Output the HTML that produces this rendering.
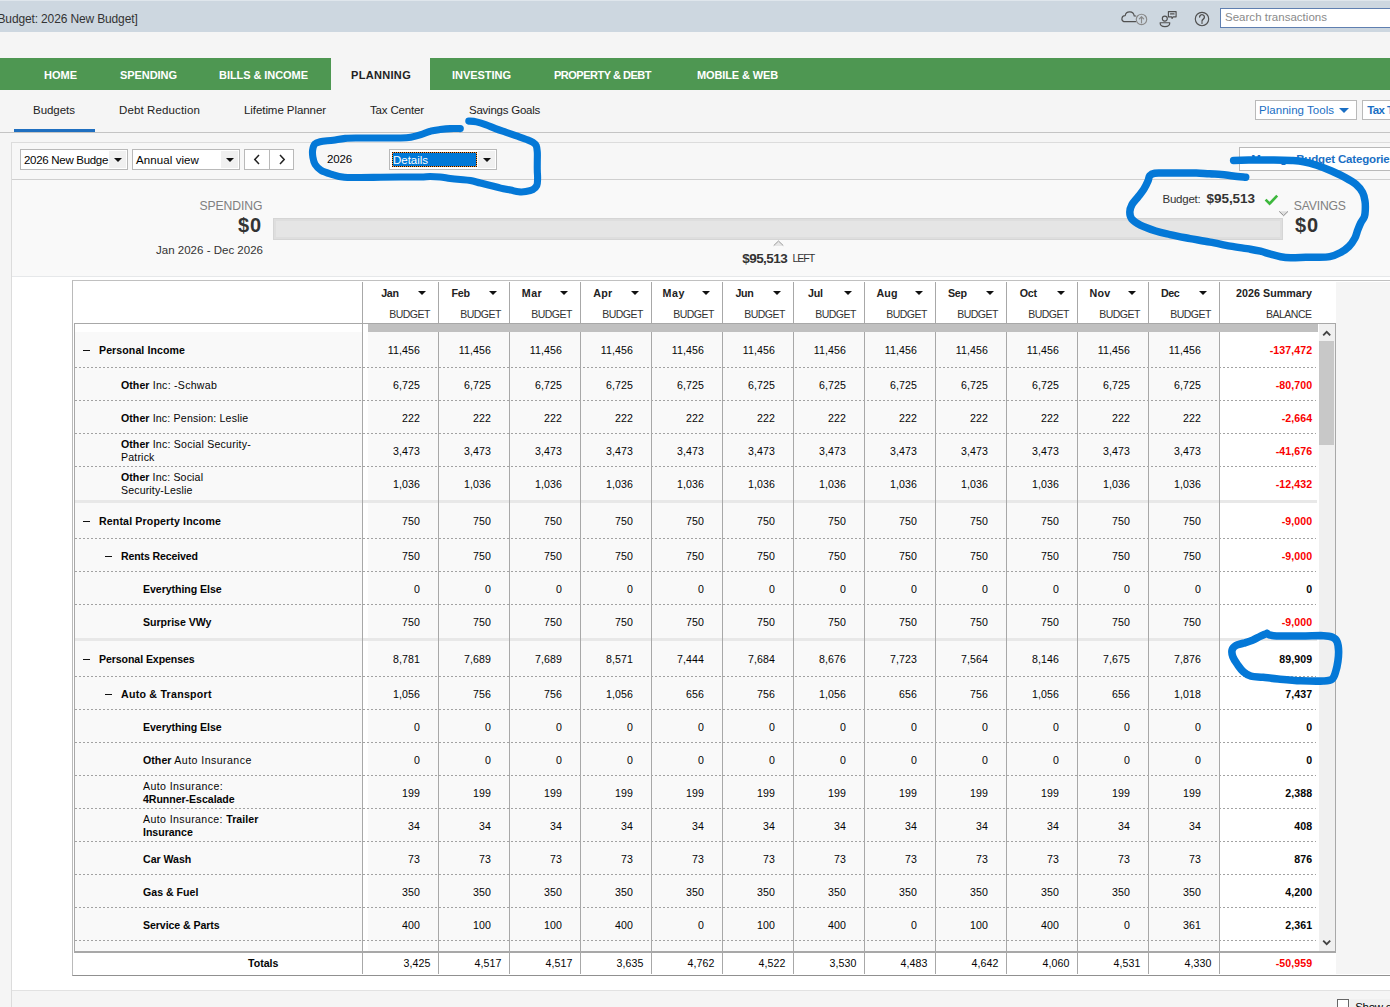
<!DOCTYPE html>
<html lang="en">
<head>
<meta charset="utf-8">
<title>Budget: 2026 New Budget</title>
<style>
html,body{margin:0;padding:0}
body{width:1390px;height:1007px;position:relative;overflow:hidden;background:#f5f5f5;font-family:"Liberation Sans",sans-serif;color:#111}
div{box-sizing:border-box}
.a{position:absolute}
.t{position:absolute;white-space:nowrap;line-height:16px;height:16px;font-size:10.6px;color:#050505}
.t b{font-weight:700}
.m b{letter-spacing:.05px}
#title{left:0;top:0;width:1390px;height:32px;background:#cdd7e0}
#nav{left:0;top:58px;width:1390px;height:32px;background:#4e9752}
#navsel{left:331px;top:58px;width:99px;height:32px;background:#f5f5f5}
#tabline{left:0;top:132px;width:1390px;height:1px;background:#c4c4c4}
#tabsel{left:14px;top:129px;width:81px;height:3px;background:#1f6fc0}
#panel{left:11px;top:142px;width:1390px;height:870px;background:#fff;border-left:1px solid #dcdcdc;border-top:1px solid #dcdcdc}
#toolbar{left:12px;top:143px;width:1378px;height:37px;background:#f7f7f7;border-bottom:1px solid #cfcfcf}
#summary{left:12px;top:180px;width:1378px;height:97px;background:#f9f9f9;border-bottom:1px solid #e6e8ea}
#rightgray{left:1336px;top:282px;width:54px;height:692px;background:#f5f5f5}
#bottomgray{left:12px;top:990px;width:1378px;height:17px;background:#f5f5f5;border-top:1px solid #e2e2e2}
.sel{position:absolute;height:21px;top:149px;background:#fff;border:1px solid #b9b9b9}
.sel i{position:absolute;right:1px;top:1px;width:17px;height:17px;background:#f0f0f0}
.sel i:after{content:"";position:absolute;left:5px;top:7px;border-left:4px solid transparent;border-right:4px solid transparent;border-top:4px solid #111}
.btn{position:absolute;background:#fff;border:1px solid #b9b9b9}
#bar{left:273px;top:218px;width:1010px;height:22px;background:#e5e5e5;border:1px solid #d5d5d5;box-shadow:inset 0 0 0 2px #dedede}
/* table */
#outer{left:72px;top:280px;width:1318px;height:696px;border-top:1px solid #c0c0c0;border-left:1px solid #bababa;border-bottom:1px solid #909090;background:#fff}
#grid{left:74px;top:323px;width:1262px;height:630px;border:1px solid #a8a8a8;border-bottom:2px solid #a8a8a8;background:#fff}
#graybar{left:368px;top:324px;width:950px;height:8px;background:#c0c0c0}
.row{position:absolute;left:75px;width:1242px;background:linear-gradient(to right,#f9f9f9 0,#f9f9f9 288px,#fff 288px,#fff 293px,#f9f9f9 293px,#f9f9f9 1145px,#fff 1145px)}
.row.dash{background:repeating-linear-gradient(to right,#a2a2a2 0,#a2a2a2 2px,transparent 2px,transparent 4px) 0 100%/1241px 1px no-repeat,linear-gradient(to right,#f9f9f9 0,#f9f9f9 288px,#fff 288px,#fff 293px,#f9f9f9 293px,#f9f9f9 1145px,#fff 1145px)}
.band{position:absolute;left:75px;width:1242px;height:3px;background:#e8e8e8}
.minus{position:absolute;width:7px;height:1px;background:#111}
.marr{position:absolute;top:291px;border-left:4px solid transparent;border-right:4px solid transparent;border-top:4px solid #111}
.vs{position:absolute;width:1px;background:#a8a8a8}
#strip{left:363px;top:332px;width:5px;height:619px;background:#fff}
#sumcol{left:1220px;top:332px;width:98px;height:619px;background:#fff}
#sbar{left:1319px;top:324px;width:16px;height:627px;background:#f0f0f0}
#thumb{left:1319px;top:341px;width:15px;height:104px;background:#c8c8c8}
.dl{position:absolute;left:75px;width:1242px;height:0;border-top:1px dashed #9a9a9a}
</style>
</head>
<body>
<div id="title" class="a"></div>
<div class="a" style="left:0;top:0;width:1390px;height:1px;background:#dfe6ec"></div>
<div id="nav" class="a"></div>
<div id="navsel" class="a"></div>
<div id="tabline" class="a"></div>
<div id="tabsel" class="a"></div>
<div id="panel" class="a"></div>
<div id="toolbar" class="a"></div>
<div id="summary" class="a"></div>
<div id="bottomgray" class="a"></div>

<!-- title-bar search + icons -->
<div class="a" style="left:1220px;top:8px;width:180px;height:20px;background:#fff;border:1px solid #5f7fb0"></div>
<svg class="a" style="left:1110px;top:0" width="110" height="32" viewBox="0 0 110 32" fill="none" stroke="#505050" stroke-width="1.15" stroke-linecap="round" stroke-linejoin="round">
  <path d="M25.6 21.6H13.8a3.1 3.1 0 0 1 1.4-5.95 4.55 4.55 0 0 1 9 .35h1.6"/>
  <circle cx="31.5" cy="19.4" r="5.2" stroke="#8a8a8a"/>
  <path d="M31.5 22.8V16.7M29.3 18.8l2.2-2.2 2.2 2.2" stroke="#8a8a8a"/>
  <circle cx="54.8" cy="18.6" r="2.5"/>
  <path d="M50.1 22.7h9.7c0 2.4-2.2 3.9-4.85 3.9s-4.85-1.5-4.85-3.9z"/>
  <path d="M58.4 11.6h7.7v5.2h-3l-1 1.7-.4-1.7h-3.3z"/>
  <path d="M60.6 13.9h3.4" stroke-width="1.4"/>
  <circle cx="92" cy="19" r="6.7"/>
  <path d="M89.6 17.1a2.4 2.4 0 1 1 3.7 2c-.9.6-1.3 1-1.3 2.1M92 22.7v.5" stroke-width="1.35"/>
</svg>

<!-- right subtabs buttons -->
<div class="btn" style="left:1255px;top:100px;width:102px;height:20px"></div>
<div class="a" style="left:1339px;top:108px;border-left:5px solid transparent;border-right:5px solid transparent;border-top:5px solid #1a6fc4"></div>
<div class="btn" style="left:1362px;top:100px;width:40px;height:20px"></div>

<!-- toolbar controls -->
<div class="sel" style="left:20px;width:108px"><i></i></div>
<div class="sel" style="left:132px;width:108px"><i></i></div>
<div class="btn" style="left:244px;top:149px;width:26px;height:21px"></div>
<div class="btn" style="left:269px;top:149px;width:25px;height:21px"></div>
<svg class="a" style="left:244px;top:149px" width="50" height="21" fill="none" stroke="#222" stroke-width="1.5"><path d="M15 6l-4.2 4.5L15 15M36 6l4.2 4.5L36 15"/></svg>
<div class="sel" style="left:389px;width:108px"><i></i></div>
<div class="a" style="left:392px;top:152px;width:85px;height:15px;background:#ff9030;border:1px dotted #111"><div class="a" style="left:0;top:0;width:83px;height:13px;background:#0078d7"></div></div>
<div class="btn" style="left:1239px;top:147px;width:170px;height:24px"></div>

<!-- summary bar -->
<div id="bar" class="a"></div>
<svg class="a" style="left:1260px;top:190px" width="34" height="30" fill="none">
  <path d="M5.6 9.6l4 4.1 7.6-8.1" stroke="#3db83d" stroke-width="2.6"/>
  <path d="M19.2 21.3h8.8l-4.4 4.4z" fill="#dedede"/>
  <path d="M19.2 21.4l4.4 4.3 4.4-4.3" stroke="#8a8a8a" stroke-width="1"/>
</svg>
<svg class="a" style="left:770px;top:239px" width="16" height="9"><path d="M3.7 6.9l4.8-4.9 4.8 4.9z" fill="#e6e6e6"/><path d="M3.7 6.6l4.8-4.6 4.8 4.6" fill="none" stroke="#9a9a9a" stroke-width="1"/></svg>

<!-- table -->
<div id="outer" class="a"></div>
<div id="rightgray" class="a"></div>
<div id="grid" class="a"></div>
<div class="row dash" style="top:332px;height:36px"></div>
<div class="minus" style="left:83px;top:350px"></div>
<div class="row dash" style="top:368px;height:33px"></div>
<div class="row dash" style="top:401px;height:33px"></div>
<div class="row dash" style="top:434px;height:33px"></div>
<div class="row" style="top:467px;height:33px"></div>
<div class="band" style="top:500px"></div>
<div class="row dash" style="top:503px;height:36px"></div>
<div class="minus" style="left:83px;top:521px"></div>
<div class="row dash" style="top:539px;height:33px"></div>
<div class="minus" style="left:105px;top:556px"></div>
<div class="row dash" style="top:572px;height:33px"></div>
<div class="row" style="top:605px;height:33px"></div>
<div class="band" style="top:638px"></div>
<div class="row dash" style="top:641px;height:36px"></div>
<div class="minus" style="left:83px;top:659px"></div>
<div class="row dash" style="top:677px;height:33px"></div>
<div class="minus" style="left:105px;top:694px"></div>
<div class="row dash" style="top:710px;height:33px"></div>
<div class="row dash" style="top:743px;height:33px"></div>
<div class="row dash" style="top:776px;height:33px"></div>
<div class="row dash" style="top:809px;height:33px"></div>
<div class="row dash" style="top:842px;height:33px"></div>
<div class="row dash" style="top:875px;height:33px"></div>
<div class="row dash" style="top:908px;height:33px"></div>
<div class="row" style="top:941px;height:10px"></div>
<div id="sbar" class="a"></div>
<div id="thumb" class="a"></div>
<svg class="a" style="left:1318px;top:324px" width="17" height="627" fill="none" stroke="#444" stroke-width="1.9"><path d="M5.2 11.3l3.5-3.5 3.5 3.5M5.2 616.7l3.5 3.5 3.5-3.5"/></svg>
<div class="marr" style="left:418px"></div>
<div class="marr" style="left:489px"></div>
<div class="marr" style="left:560px"></div>
<div class="marr" style="left:631px"></div>
<div class="marr" style="left:702px"></div>
<div class="marr" style="left:773px"></div>
<div class="marr" style="left:844px"></div>
<div class="marr" style="left:915px"></div>
<div class="marr" style="left:986px"></div>
<div class="marr" style="left:1057px"></div>
<div class="marr" style="left:1128px"></div>
<div class="marr" style="left:1199px"></div>
<div class="vs" style="left:362px;top:282px;height:692px"></div>
<div class="vs" style="left:438px;top:282px;height:692px"></div>
<div class="vs" style="left:509px;top:282px;height:692px"></div>
<div class="vs" style="left:580px;top:282px;height:692px"></div>
<div class="vs" style="left:651px;top:282px;height:692px"></div>
<div class="vs" style="left:722px;top:282px;height:692px"></div>
<div class="vs" style="left:793px;top:282px;height:692px"></div>
<div class="vs" style="left:864px;top:282px;height:692px"></div>
<div class="vs" style="left:935px;top:282px;height:692px"></div>
<div class="vs" style="left:1006px;top:282px;height:692px"></div>
<div class="vs" style="left:1077px;top:282px;height:692px"></div>
<div class="vs" style="left:1148px;top:282px;height:692px"></div>
<div class="vs" style="left:1219px;top:282px;height:692px"></div>
<div id="graybar" class="a"></div>

<!-- bottom checkbox -->
<div class="a" style="left:1350px;top:999px;width:40px;height:8px;background:#f0f0f0"></div>
<div class="a" style="left:1337px;top:999px;width:12px;height:12px;background:#fff;border:1px solid #666"></div>

<div class="t" style="top:10.5px;font-size:12px;color:#333;letter-spacing:-0.14px;left:-2.5px;">Budget: 2026 New Budget]</div>
<div class="t" style="top:66.5px;font-size:11px;font-weight:700;color:#fff;left:44px;">HOME</div>
<div class="t" style="top:66.5px;font-size:11px;font-weight:700;color:#fff;letter-spacing:-0.06px;left:120px;">SPENDING</div>
<div class="t" style="top:66.5px;font-size:11px;font-weight:700;color:#fff;letter-spacing:-0.06px;left:219px;">BILLS &amp; INCOME</div>
<div class="t" style="top:66.5px;font-size:11px;font-weight:700;color:#fff;letter-spacing:-0.03px;left:452px;">INVESTING</div>
<div class="t" style="top:66.5px;font-size:11px;font-weight:700;color:#fff;letter-spacing:-0.49px;left:554px;">PROPERTY &amp; DEBT</div>
<div class="t" style="top:66.5px;font-size:11px;font-weight:700;color:#fff;letter-spacing:-0.12px;left:697px;">MOBILE &amp; WEB</div>
<div class="t" style="top:66.5px;font-size:11px;font-weight:700;color:#222;letter-spacing:0.32px;left:351px;">PLANNING</div>
<div class="t" style="top:102.0px;font-size:11.5px;color:#222;letter-spacing:-0.03px;left:33px;">Budgets</div>
<div class="t" style="top:102.0px;font-size:11.5px;color:#222;letter-spacing:0.12px;left:119px;">Debt Reduction</div>
<div class="t" style="top:102.0px;font-size:11.5px;color:#222;letter-spacing:-0.07px;left:244px;">Lifetime Planner</div>
<div class="t" style="top:102.0px;font-size:11.5px;color:#222;letter-spacing:-0.16px;left:370px;">Tax Center</div>
<div class="t" style="top:102.0px;font-size:11.5px;color:#222;letter-spacing:-0.24px;left:469px;">Savings Goals</div>
<div class="t" style="top:102.0px;font-size:11.5px;color:#1a6fc4;letter-spacing:0.03px;left:1259px;">Planning Tools</div>
<div class="t" style="top:102.0px;font-size:11.5px;font-weight:700;color:#1a6fc4;letter-spacing:-0.64px;left:1367.3px;">Tax T</div>
<div class="t" style="top:9.0px;font-size:11.5px;color:#8a8a8a;letter-spacing:0.02px;left:1225px;">Search transactions</div>
<div class="t" style="top:151.5px;font-size:11.5px;letter-spacing:-0.30px;left:24px;">2026 New Budge</div>
<div class="t" style="top:151.5px;font-size:11.5px;letter-spacing:0.09px;left:136px;">Annual view</div>
<div class="t" style="top:151.0px;font-size:11.5px;letter-spacing:-0.15px;left:327px;">2026</div>
<div class="t" style="top:152.0px;font-size:11.5px;color:#fff;letter-spacing:-0.02px;left:393px;">Details</div>
<div class="t" style="top:150.8px;font-size:11.5px;font-weight:700;color:#1a6fc4;letter-spacing:-0.15px;left:1251.2px;">Manage Budget Categories</div>
<div class="t" style="top:198.2px;font-size:12.2px;color:#808080;letter-spacing:-0.08px;right:1127.6px;">SPENDING</div>
<div class="t" style="top:217.0px;font-size:20px;font-weight:700;color:#333;letter-spacing:0.88px;right:1128.1px;">$0</div>
<div class="t" style="top:242.0px;font-size:11.5px;color:#333;letter-spacing:0.01px;right:1127.0px;">Jan 2026 - Dec 2026</div>
<div class="t" style="top:191.0px;font-size:11.5px;color:#333;letter-spacing:-0.24px;left:1162.5px;">Budget:</div>
<div class="t" style="top:191.0px;font-size:13.5px;font-weight:700;color:#333;letter-spacing:-0.04px;left:1206.5px;">$95,513</div>
<div class="t" style="top:198.2px;font-size:12.2px;color:#808080;letter-spacing:-0.18px;left:1293.8px;">SAVINGS</div>
<div class="t" style="top:217.0px;font-size:20px;font-weight:700;color:#333;letter-spacing:0.88px;left:1295px;">$0</div>
<div class="t" style="top:250.5px;font-size:13.5px;font-weight:700;color:#333;letter-spacing:-0.57px;left:742.3px;">$95,513</div>
<div class="t" style="top:249.8px;font-size:10.6px;color:#333;letter-spacing:-1.13px;left:792.6px;">LEFT</div>
<div class="t" style="top:998.5px;font-size:11.5px;letter-spacing:-0.29px;left:1355.2px;">Show c</div>
<div class="t" style="top:285.3px;font-size:10.7px;font-weight:700;color:#222;letter-spacing:-0.34px;left:381.2px;">Jan</div>
<div class="t" style="top:306.0px;font-size:10.5px;color:#333;letter-spacing:-0.54px;right:960.2px;">BUDGET</div>
<div class="t" style="top:285.3px;font-size:10.7px;font-weight:700;color:#222;letter-spacing:-0.21px;left:451.5px;">Feb</div>
<div class="t" style="top:306.0px;font-size:10.5px;color:#333;letter-spacing:-0.54px;right:889.2px;">BUDGET</div>
<div class="t" style="top:285.3px;font-size:10.7px;font-weight:700;color:#222;letter-spacing:0.43px;left:521.8px;">Mar</div>
<div class="t" style="top:306.0px;font-size:10.5px;color:#333;letter-spacing:-0.54px;right:818.2px;">BUDGET</div>
<div class="t" style="top:285.3px;font-size:10.7px;font-weight:700;color:#222;letter-spacing:0.20px;left:593.3px;">Apr</div>
<div class="t" style="top:306.0px;font-size:10.5px;color:#333;letter-spacing:-0.54px;right:747.2px;">BUDGET</div>
<div class="t" style="top:285.3px;font-size:10.7px;font-weight:700;color:#222;letter-spacing:0.47px;left:662.6px;">May</div>
<div class="t" style="top:306.0px;font-size:10.5px;color:#333;letter-spacing:-0.54px;right:676.2px;">BUDGET</div>
<div class="t" style="top:285.3px;font-size:10.7px;font-weight:700;color:#222;letter-spacing:-0.34px;left:735.4px;">Jun</div>
<div class="t" style="top:306.0px;font-size:10.5px;color:#333;letter-spacing:-0.54px;right:605.2px;">BUDGET</div>
<div class="t" style="top:285.3px;font-size:10.7px;font-weight:700;color:#222;letter-spacing:-0.28px;left:808px;">Jul</div>
<div class="t" style="top:306.0px;font-size:10.5px;color:#333;letter-spacing:-0.54px;right:534.2px;">BUDGET</div>
<div class="t" style="top:285.3px;font-size:10.7px;font-weight:700;color:#222;letter-spacing:0.14px;left:876.4px;">Aug</div>
<div class="t" style="top:306.0px;font-size:10.5px;color:#333;letter-spacing:-0.54px;right:463.2px;">BUDGET</div>
<div class="t" style="top:285.3px;font-size:10.7px;font-weight:700;color:#222;letter-spacing:-0.30px;left:948px;">Sep</div>
<div class="t" style="top:306.0px;font-size:10.5px;color:#333;letter-spacing:-0.54px;right:392.2px;">BUDGET</div>
<div class="t" style="top:285.3px;font-size:10.7px;font-weight:700;color:#222;letter-spacing:-0.24px;left:1019.8px;">Oct</div>
<div class="t" style="top:306.0px;font-size:10.5px;color:#333;letter-spacing:-0.54px;right:321.2px;">BUDGET</div>
<div class="t" style="top:285.3px;font-size:10.7px;font-weight:700;color:#222;letter-spacing:0.23px;left:1089.5px;">Nov</div>
<div class="t" style="top:306.0px;font-size:10.5px;color:#333;letter-spacing:-0.54px;right:250.2px;">BUDGET</div>
<div class="t" style="top:285.3px;font-size:10.7px;font-weight:700;color:#222;letter-spacing:-0.40px;left:1161px;">Dec</div>
<div class="t" style="top:306.0px;font-size:10.5px;color:#333;letter-spacing:-0.54px;right:179.2px;">BUDGET</div>
<div class="t" style="top:285.3px;font-size:10.7px;font-weight:700;color:#222;letter-spacing:0.04px;right:78.0px;">2026 Summary</div>
<div class="t" style="top:306.0px;font-size:10.5px;color:#333;letter-spacing:-0.50px;right:78.5px;">BALANCE</div>
<div class="t" style="top:342.0px;font-size:10.6px;letter-spacing:0.08px;left:99px;"><b>Personal Income</b></div>
<div class="t" style="top:342.0px;font-size:10.6px;letter-spacing:0.11px;right:969.9px;">11,456</div>
<div class="t" style="top:342.0px;font-size:10.6px;letter-spacing:0.11px;right:898.9px;">11,456</div>
<div class="t" style="top:342.0px;font-size:10.6px;letter-spacing:0.11px;right:827.9px;">11,456</div>
<div class="t" style="top:342.0px;font-size:10.6px;letter-spacing:0.11px;right:756.9px;">11,456</div>
<div class="t" style="top:342.0px;font-size:10.6px;letter-spacing:0.11px;right:685.9px;">11,456</div>
<div class="t" style="top:342.0px;font-size:10.6px;letter-spacing:0.11px;right:614.9px;">11,456</div>
<div class="t" style="top:342.0px;font-size:10.6px;letter-spacing:0.11px;right:543.9px;">11,456</div>
<div class="t" style="top:342.0px;font-size:10.6px;letter-spacing:0.11px;right:472.9px;">11,456</div>
<div class="t" style="top:342.0px;font-size:10.6px;letter-spacing:0.11px;right:401.9px;">11,456</div>
<div class="t" style="top:342.0px;font-size:10.6px;letter-spacing:0.11px;right:330.9px;">11,456</div>
<div class="t" style="top:342.0px;font-size:10.6px;letter-spacing:0.11px;right:259.9px;">11,456</div>
<div class="t" style="top:342.0px;font-size:10.6px;letter-spacing:0.11px;right:188.9px;">11,456</div>
<div class="t" style="top:342.0px;font-size:10.6px;font-weight:700;color:#fa0000;letter-spacing:0.07px;right:77.9px;">-137,472</div>
<div class="t m" style="top:377.0px;font-size:10.6px;letter-spacing:0.26px;left:121px;"><b>Other</b> Inc: -Schwab</div>
<div class="t" style="top:377.0px;font-size:10.6px;letter-spacing:0.11px;right:969.9px;">6,725</div>
<div class="t" style="top:377.0px;font-size:10.6px;letter-spacing:0.11px;right:898.9px;">6,725</div>
<div class="t" style="top:377.0px;font-size:10.6px;letter-spacing:0.11px;right:827.9px;">6,725</div>
<div class="t" style="top:377.0px;font-size:10.6px;letter-spacing:0.11px;right:756.9px;">6,725</div>
<div class="t" style="top:377.0px;font-size:10.6px;letter-spacing:0.11px;right:685.9px;">6,725</div>
<div class="t" style="top:377.0px;font-size:10.6px;letter-spacing:0.11px;right:614.9px;">6,725</div>
<div class="t" style="top:377.0px;font-size:10.6px;letter-spacing:0.11px;right:543.9px;">6,725</div>
<div class="t" style="top:377.0px;font-size:10.6px;letter-spacing:0.11px;right:472.9px;">6,725</div>
<div class="t" style="top:377.0px;font-size:10.6px;letter-spacing:0.11px;right:401.9px;">6,725</div>
<div class="t" style="top:377.0px;font-size:10.6px;letter-spacing:0.11px;right:330.9px;">6,725</div>
<div class="t" style="top:377.0px;font-size:10.6px;letter-spacing:0.11px;right:259.9px;">6,725</div>
<div class="t" style="top:377.0px;font-size:10.6px;letter-spacing:0.11px;right:188.9px;">6,725</div>
<div class="t" style="top:377.0px;font-size:10.6px;font-weight:700;color:#fa0000;letter-spacing:0.07px;right:77.9px;">-80,700</div>
<div class="t m" style="top:410.0px;font-size:10.6px;letter-spacing:0.19px;left:121px;"><b>Other</b> Inc: Pension: Leslie</div>
<div class="t" style="top:410.0px;font-size:10.6px;letter-spacing:0.11px;right:969.9px;">222</div>
<div class="t" style="top:410.0px;font-size:10.6px;letter-spacing:0.11px;right:898.9px;">222</div>
<div class="t" style="top:410.0px;font-size:10.6px;letter-spacing:0.11px;right:827.9px;">222</div>
<div class="t" style="top:410.0px;font-size:10.6px;letter-spacing:0.11px;right:756.9px;">222</div>
<div class="t" style="top:410.0px;font-size:10.6px;letter-spacing:0.11px;right:685.9px;">222</div>
<div class="t" style="top:410.0px;font-size:10.6px;letter-spacing:0.11px;right:614.9px;">222</div>
<div class="t" style="top:410.0px;font-size:10.6px;letter-spacing:0.11px;right:543.9px;">222</div>
<div class="t" style="top:410.0px;font-size:10.6px;letter-spacing:0.11px;right:472.9px;">222</div>
<div class="t" style="top:410.0px;font-size:10.6px;letter-spacing:0.11px;right:401.9px;">222</div>
<div class="t" style="top:410.0px;font-size:10.6px;letter-spacing:0.11px;right:330.9px;">222</div>
<div class="t" style="top:410.0px;font-size:10.6px;letter-spacing:0.11px;right:259.9px;">222</div>
<div class="t" style="top:410.0px;font-size:10.6px;letter-spacing:0.11px;right:188.9px;">222</div>
<div class="t" style="top:410.0px;font-size:10.6px;font-weight:700;color:#fa0000;letter-spacing:0.07px;right:77.9px;">-2,664</div>
<div class="t m" style="top:436.0px;font-size:10.6px;letter-spacing:0.22px;left:121px;"><b>Other</b> Inc: Social Security-</div>
<div class="t" style="top:449.0px;font-size:10.6px;letter-spacing:0.17px;left:121px;">Patrick</div>
<div class="t" style="top:443.0px;font-size:10.6px;letter-spacing:0.11px;right:969.9px;">3,473</div>
<div class="t" style="top:443.0px;font-size:10.6px;letter-spacing:0.11px;right:898.9px;">3,473</div>
<div class="t" style="top:443.0px;font-size:10.6px;letter-spacing:0.11px;right:827.9px;">3,473</div>
<div class="t" style="top:443.0px;font-size:10.6px;letter-spacing:0.11px;right:756.9px;">3,473</div>
<div class="t" style="top:443.0px;font-size:10.6px;letter-spacing:0.11px;right:685.9px;">3,473</div>
<div class="t" style="top:443.0px;font-size:10.6px;letter-spacing:0.11px;right:614.9px;">3,473</div>
<div class="t" style="top:443.0px;font-size:10.6px;letter-spacing:0.11px;right:543.9px;">3,473</div>
<div class="t" style="top:443.0px;font-size:10.6px;letter-spacing:0.11px;right:472.9px;">3,473</div>
<div class="t" style="top:443.0px;font-size:10.6px;letter-spacing:0.11px;right:401.9px;">3,473</div>
<div class="t" style="top:443.0px;font-size:10.6px;letter-spacing:0.11px;right:330.9px;">3,473</div>
<div class="t" style="top:443.0px;font-size:10.6px;letter-spacing:0.11px;right:259.9px;">3,473</div>
<div class="t" style="top:443.0px;font-size:10.6px;letter-spacing:0.11px;right:188.9px;">3,473</div>
<div class="t" style="top:443.0px;font-size:10.6px;font-weight:700;color:#fa0000;letter-spacing:0.07px;right:77.9px;">-41,676</div>
<div class="t m" style="top:469.0px;font-size:10.6px;letter-spacing:0.15px;left:121px;"><b>Other</b> Inc: Social</div>
<div class="t" style="top:482.0px;font-size:10.6px;letter-spacing:0.13px;left:121px;">Security-Leslie</div>
<div class="t" style="top:476.0px;font-size:10.6px;letter-spacing:0.11px;right:969.9px;">1,036</div>
<div class="t" style="top:476.0px;font-size:10.6px;letter-spacing:0.11px;right:898.9px;">1,036</div>
<div class="t" style="top:476.0px;font-size:10.6px;letter-spacing:0.11px;right:827.9px;">1,036</div>
<div class="t" style="top:476.0px;font-size:10.6px;letter-spacing:0.11px;right:756.9px;">1,036</div>
<div class="t" style="top:476.0px;font-size:10.6px;letter-spacing:0.11px;right:685.9px;">1,036</div>
<div class="t" style="top:476.0px;font-size:10.6px;letter-spacing:0.11px;right:614.9px;">1,036</div>
<div class="t" style="top:476.0px;font-size:10.6px;letter-spacing:0.11px;right:543.9px;">1,036</div>
<div class="t" style="top:476.0px;font-size:10.6px;letter-spacing:0.11px;right:472.9px;">1,036</div>
<div class="t" style="top:476.0px;font-size:10.6px;letter-spacing:0.11px;right:401.9px;">1,036</div>
<div class="t" style="top:476.0px;font-size:10.6px;letter-spacing:0.11px;right:330.9px;">1,036</div>
<div class="t" style="top:476.0px;font-size:10.6px;letter-spacing:0.11px;right:259.9px;">1,036</div>
<div class="t" style="top:476.0px;font-size:10.6px;letter-spacing:0.11px;right:188.9px;">1,036</div>
<div class="t" style="top:476.0px;font-size:10.6px;font-weight:700;color:#fa0000;letter-spacing:0.07px;right:77.9px;">-12,432</div>
<div class="t" style="top:513.0px;font-size:10.6px;letter-spacing:0.14px;left:99px;"><b>Rental Property Income</b></div>
<div class="t" style="top:513.0px;font-size:10.6px;letter-spacing:0.11px;right:969.9px;">750</div>
<div class="t" style="top:513.0px;font-size:10.6px;letter-spacing:0.11px;right:898.9px;">750</div>
<div class="t" style="top:513.0px;font-size:10.6px;letter-spacing:0.11px;right:827.9px;">750</div>
<div class="t" style="top:513.0px;font-size:10.6px;letter-spacing:0.11px;right:756.9px;">750</div>
<div class="t" style="top:513.0px;font-size:10.6px;letter-spacing:0.11px;right:685.9px;">750</div>
<div class="t" style="top:513.0px;font-size:10.6px;letter-spacing:0.11px;right:614.9px;">750</div>
<div class="t" style="top:513.0px;font-size:10.6px;letter-spacing:0.11px;right:543.9px;">750</div>
<div class="t" style="top:513.0px;font-size:10.6px;letter-spacing:0.11px;right:472.9px;">750</div>
<div class="t" style="top:513.0px;font-size:10.6px;letter-spacing:0.11px;right:401.9px;">750</div>
<div class="t" style="top:513.0px;font-size:10.6px;letter-spacing:0.11px;right:330.9px;">750</div>
<div class="t" style="top:513.0px;font-size:10.6px;letter-spacing:0.11px;right:259.9px;">750</div>
<div class="t" style="top:513.0px;font-size:10.6px;letter-spacing:0.11px;right:188.9px;">750</div>
<div class="t" style="top:513.0px;font-size:10.6px;font-weight:700;color:#fa0000;letter-spacing:0.07px;right:77.9px;">-9,000</div>
<div class="t" style="top:548.0px;font-size:10.6px;letter-spacing:-0.14px;left:121px;"><b>Rents Received</b></div>
<div class="t" style="top:548.0px;font-size:10.6px;letter-spacing:0.11px;right:969.9px;">750</div>
<div class="t" style="top:548.0px;font-size:10.6px;letter-spacing:0.11px;right:898.9px;">750</div>
<div class="t" style="top:548.0px;font-size:10.6px;letter-spacing:0.11px;right:827.9px;">750</div>
<div class="t" style="top:548.0px;font-size:10.6px;letter-spacing:0.11px;right:756.9px;">750</div>
<div class="t" style="top:548.0px;font-size:10.6px;letter-spacing:0.11px;right:685.9px;">750</div>
<div class="t" style="top:548.0px;font-size:10.6px;letter-spacing:0.11px;right:614.9px;">750</div>
<div class="t" style="top:548.0px;font-size:10.6px;letter-spacing:0.11px;right:543.9px;">750</div>
<div class="t" style="top:548.0px;font-size:10.6px;letter-spacing:0.11px;right:472.9px;">750</div>
<div class="t" style="top:548.0px;font-size:10.6px;letter-spacing:0.11px;right:401.9px;">750</div>
<div class="t" style="top:548.0px;font-size:10.6px;letter-spacing:0.11px;right:330.9px;">750</div>
<div class="t" style="top:548.0px;font-size:10.6px;letter-spacing:0.11px;right:259.9px;">750</div>
<div class="t" style="top:548.0px;font-size:10.6px;letter-spacing:0.11px;right:188.9px;">750</div>
<div class="t" style="top:548.0px;font-size:10.6px;font-weight:700;color:#fa0000;letter-spacing:0.07px;right:77.9px;">-9,000</div>
<div class="t" style="top:581.0px;font-size:10.6px;letter-spacing:-0.06px;left:143px;"><b>Everything Else</b></div>
<div class="t" style="top:581.0px;font-size:10.6px;letter-spacing:0.11px;right:969.9px;">0</div>
<div class="t" style="top:581.0px;font-size:10.6px;letter-spacing:0.11px;right:898.9px;">0</div>
<div class="t" style="top:581.0px;font-size:10.6px;letter-spacing:0.11px;right:827.9px;">0</div>
<div class="t" style="top:581.0px;font-size:10.6px;letter-spacing:0.11px;right:756.9px;">0</div>
<div class="t" style="top:581.0px;font-size:10.6px;letter-spacing:0.11px;right:685.9px;">0</div>
<div class="t" style="top:581.0px;font-size:10.6px;letter-spacing:0.11px;right:614.9px;">0</div>
<div class="t" style="top:581.0px;font-size:10.6px;letter-spacing:0.11px;right:543.9px;">0</div>
<div class="t" style="top:581.0px;font-size:10.6px;letter-spacing:0.11px;right:472.9px;">0</div>
<div class="t" style="top:581.0px;font-size:10.6px;letter-spacing:0.11px;right:401.9px;">0</div>
<div class="t" style="top:581.0px;font-size:10.6px;letter-spacing:0.11px;right:330.9px;">0</div>
<div class="t" style="top:581.0px;font-size:10.6px;letter-spacing:0.11px;right:259.9px;">0</div>
<div class="t" style="top:581.0px;font-size:10.6px;letter-spacing:0.11px;right:188.9px;">0</div>
<div class="t" style="top:581.0px;font-size:10.6px;font-weight:700;letter-spacing:0.07px;right:77.9px;">0</div>
<div class="t" style="top:614.0px;font-size:10.6px;letter-spacing:-0.02px;left:143px;"><b>Surprise VWy</b></div>
<div class="t" style="top:614.0px;font-size:10.6px;letter-spacing:0.11px;right:969.9px;">750</div>
<div class="t" style="top:614.0px;font-size:10.6px;letter-spacing:0.11px;right:898.9px;">750</div>
<div class="t" style="top:614.0px;font-size:10.6px;letter-spacing:0.11px;right:827.9px;">750</div>
<div class="t" style="top:614.0px;font-size:10.6px;letter-spacing:0.11px;right:756.9px;">750</div>
<div class="t" style="top:614.0px;font-size:10.6px;letter-spacing:0.11px;right:685.9px;">750</div>
<div class="t" style="top:614.0px;font-size:10.6px;letter-spacing:0.11px;right:614.9px;">750</div>
<div class="t" style="top:614.0px;font-size:10.6px;letter-spacing:0.11px;right:543.9px;">750</div>
<div class="t" style="top:614.0px;font-size:10.6px;letter-spacing:0.11px;right:472.9px;">750</div>
<div class="t" style="top:614.0px;font-size:10.6px;letter-spacing:0.11px;right:401.9px;">750</div>
<div class="t" style="top:614.0px;font-size:10.6px;letter-spacing:0.11px;right:330.9px;">750</div>
<div class="t" style="top:614.0px;font-size:10.6px;letter-spacing:0.11px;right:259.9px;">750</div>
<div class="t" style="top:614.0px;font-size:10.6px;letter-spacing:0.11px;right:188.9px;">750</div>
<div class="t" style="top:614.0px;font-size:10.6px;font-weight:700;color:#fa0000;letter-spacing:0.07px;right:77.9px;">-9,000</div>
<div class="t" style="top:651.0px;font-size:10.6px;letter-spacing:-0.09px;left:99px;"><b>Personal Expenses</b></div>
<div class="t" style="top:651.0px;font-size:10.6px;letter-spacing:0.11px;right:969.9px;">8,781</div>
<div class="t" style="top:651.0px;font-size:10.6px;letter-spacing:0.11px;right:898.9px;">7,689</div>
<div class="t" style="top:651.0px;font-size:10.6px;letter-spacing:0.11px;right:827.9px;">7,689</div>
<div class="t" style="top:651.0px;font-size:10.6px;letter-spacing:0.11px;right:756.9px;">8,571</div>
<div class="t" style="top:651.0px;font-size:10.6px;letter-spacing:0.11px;right:685.9px;">7,444</div>
<div class="t" style="top:651.0px;font-size:10.6px;letter-spacing:0.11px;right:614.9px;">7,684</div>
<div class="t" style="top:651.0px;font-size:10.6px;letter-spacing:0.11px;right:543.9px;">8,676</div>
<div class="t" style="top:651.0px;font-size:10.6px;letter-spacing:0.11px;right:472.9px;">7,723</div>
<div class="t" style="top:651.0px;font-size:10.6px;letter-spacing:0.11px;right:401.9px;">7,564</div>
<div class="t" style="top:651.0px;font-size:10.6px;letter-spacing:0.11px;right:330.9px;">8,146</div>
<div class="t" style="top:651.0px;font-size:10.6px;letter-spacing:0.11px;right:259.9px;">7,675</div>
<div class="t" style="top:651.0px;font-size:10.6px;letter-spacing:0.11px;right:188.9px;">7,876</div>
<div class="t" style="top:651.0px;font-size:10.6px;font-weight:700;letter-spacing:0.07px;right:77.9px;">89,909</div>
<div class="t" style="top:686.0px;font-size:10.6px;letter-spacing:0.26px;left:121px;"><b>Auto &amp; Transport</b></div>
<div class="t" style="top:686.0px;font-size:10.6px;letter-spacing:0.11px;right:969.9px;">1,056</div>
<div class="t" style="top:686.0px;font-size:10.6px;letter-spacing:0.11px;right:898.9px;">756</div>
<div class="t" style="top:686.0px;font-size:10.6px;letter-spacing:0.11px;right:827.9px;">756</div>
<div class="t" style="top:686.0px;font-size:10.6px;letter-spacing:0.11px;right:756.9px;">1,056</div>
<div class="t" style="top:686.0px;font-size:10.6px;letter-spacing:0.11px;right:685.9px;">656</div>
<div class="t" style="top:686.0px;font-size:10.6px;letter-spacing:0.11px;right:614.9px;">756</div>
<div class="t" style="top:686.0px;font-size:10.6px;letter-spacing:0.11px;right:543.9px;">1,056</div>
<div class="t" style="top:686.0px;font-size:10.6px;letter-spacing:0.11px;right:472.9px;">656</div>
<div class="t" style="top:686.0px;font-size:10.6px;letter-spacing:0.11px;right:401.9px;">756</div>
<div class="t" style="top:686.0px;font-size:10.6px;letter-spacing:0.11px;right:330.9px;">1,056</div>
<div class="t" style="top:686.0px;font-size:10.6px;letter-spacing:0.11px;right:259.9px;">656</div>
<div class="t" style="top:686.0px;font-size:10.6px;letter-spacing:0.11px;right:188.9px;">1,018</div>
<div class="t" style="top:686.0px;font-size:10.6px;font-weight:700;letter-spacing:0.07px;right:77.9px;">7,437</div>
<div class="t" style="top:719.0px;font-size:10.6px;letter-spacing:-0.06px;left:143px;"><b>Everything Else</b></div>
<div class="t" style="top:719.0px;font-size:10.6px;letter-spacing:0.11px;right:969.9px;">0</div>
<div class="t" style="top:719.0px;font-size:10.6px;letter-spacing:0.11px;right:898.9px;">0</div>
<div class="t" style="top:719.0px;font-size:10.6px;letter-spacing:0.11px;right:827.9px;">0</div>
<div class="t" style="top:719.0px;font-size:10.6px;letter-spacing:0.11px;right:756.9px;">0</div>
<div class="t" style="top:719.0px;font-size:10.6px;letter-spacing:0.11px;right:685.9px;">0</div>
<div class="t" style="top:719.0px;font-size:10.6px;letter-spacing:0.11px;right:614.9px;">0</div>
<div class="t" style="top:719.0px;font-size:10.6px;letter-spacing:0.11px;right:543.9px;">0</div>
<div class="t" style="top:719.0px;font-size:10.6px;letter-spacing:0.11px;right:472.9px;">0</div>
<div class="t" style="top:719.0px;font-size:10.6px;letter-spacing:0.11px;right:401.9px;">0</div>
<div class="t" style="top:719.0px;font-size:10.6px;letter-spacing:0.11px;right:330.9px;">0</div>
<div class="t" style="top:719.0px;font-size:10.6px;letter-spacing:0.11px;right:259.9px;">0</div>
<div class="t" style="top:719.0px;font-size:10.6px;letter-spacing:0.11px;right:188.9px;">0</div>
<div class="t" style="top:719.0px;font-size:10.6px;font-weight:700;letter-spacing:0.07px;right:77.9px;">0</div>
<div class="t m" style="top:752.0px;font-size:10.6px;letter-spacing:0.44px;left:143px;"><b>Other</b> Auto Insurance</div>
<div class="t" style="top:752.0px;font-size:10.6px;letter-spacing:0.11px;right:969.9px;">0</div>
<div class="t" style="top:752.0px;font-size:10.6px;letter-spacing:0.11px;right:898.9px;">0</div>
<div class="t" style="top:752.0px;font-size:10.6px;letter-spacing:0.11px;right:827.9px;">0</div>
<div class="t" style="top:752.0px;font-size:10.6px;letter-spacing:0.11px;right:756.9px;">0</div>
<div class="t" style="top:752.0px;font-size:10.6px;letter-spacing:0.11px;right:685.9px;">0</div>
<div class="t" style="top:752.0px;font-size:10.6px;letter-spacing:0.11px;right:614.9px;">0</div>
<div class="t" style="top:752.0px;font-size:10.6px;letter-spacing:0.11px;right:543.9px;">0</div>
<div class="t" style="top:752.0px;font-size:10.6px;letter-spacing:0.11px;right:472.9px;">0</div>
<div class="t" style="top:752.0px;font-size:10.6px;letter-spacing:0.11px;right:401.9px;">0</div>
<div class="t" style="top:752.0px;font-size:10.6px;letter-spacing:0.11px;right:330.9px;">0</div>
<div class="t" style="top:752.0px;font-size:10.6px;letter-spacing:0.11px;right:259.9px;">0</div>
<div class="t" style="top:752.0px;font-size:10.6px;letter-spacing:0.11px;right:188.9px;">0</div>
<div class="t" style="top:752.0px;font-size:10.6px;font-weight:700;letter-spacing:0.07px;right:77.9px;">0</div>
<div class="t" style="top:778.0px;font-size:10.6px;letter-spacing:0.40px;left:143px;">Auto Insurance:</div>
<div class="t" style="top:791.0px;font-size:10.6px;letter-spacing:-0.05px;left:143px;"><b>4Runner-Escalade</b></div>
<div class="t" style="top:785.0px;font-size:10.6px;letter-spacing:0.11px;right:969.9px;">199</div>
<div class="t" style="top:785.0px;font-size:10.6px;letter-spacing:0.11px;right:898.9px;">199</div>
<div class="t" style="top:785.0px;font-size:10.6px;letter-spacing:0.11px;right:827.9px;">199</div>
<div class="t" style="top:785.0px;font-size:10.6px;letter-spacing:0.11px;right:756.9px;">199</div>
<div class="t" style="top:785.0px;font-size:10.6px;letter-spacing:0.11px;right:685.9px;">199</div>
<div class="t" style="top:785.0px;font-size:10.6px;letter-spacing:0.11px;right:614.9px;">199</div>
<div class="t" style="top:785.0px;font-size:10.6px;letter-spacing:0.11px;right:543.9px;">199</div>
<div class="t" style="top:785.0px;font-size:10.6px;letter-spacing:0.11px;right:472.9px;">199</div>
<div class="t" style="top:785.0px;font-size:10.6px;letter-spacing:0.11px;right:401.9px;">199</div>
<div class="t" style="top:785.0px;font-size:10.6px;letter-spacing:0.11px;right:330.9px;">199</div>
<div class="t" style="top:785.0px;font-size:10.6px;letter-spacing:0.11px;right:259.9px;">199</div>
<div class="t" style="top:785.0px;font-size:10.6px;letter-spacing:0.11px;right:188.9px;">199</div>
<div class="t" style="top:785.0px;font-size:10.6px;font-weight:700;letter-spacing:0.07px;right:77.9px;">2,388</div>
<div class="t m" style="top:811.0px;font-size:10.6px;letter-spacing:0.38px;left:143px;">Auto Insurance: <b>Trailer</b></div>
<div class="t" style="top:824.0px;font-size:10.6px;letter-spacing:-0.03px;left:143px;"><b>Insurance</b></div>
<div class="t" style="top:818.0px;font-size:10.6px;letter-spacing:0.11px;right:969.9px;">34</div>
<div class="t" style="top:818.0px;font-size:10.6px;letter-spacing:0.11px;right:898.9px;">34</div>
<div class="t" style="top:818.0px;font-size:10.6px;letter-spacing:0.11px;right:827.9px;">34</div>
<div class="t" style="top:818.0px;font-size:10.6px;letter-spacing:0.11px;right:756.9px;">34</div>
<div class="t" style="top:818.0px;font-size:10.6px;letter-spacing:0.11px;right:685.9px;">34</div>
<div class="t" style="top:818.0px;font-size:10.6px;letter-spacing:0.11px;right:614.9px;">34</div>
<div class="t" style="top:818.0px;font-size:10.6px;letter-spacing:0.11px;right:543.9px;">34</div>
<div class="t" style="top:818.0px;font-size:10.6px;letter-spacing:0.11px;right:472.9px;">34</div>
<div class="t" style="top:818.0px;font-size:10.6px;letter-spacing:0.11px;right:401.9px;">34</div>
<div class="t" style="top:818.0px;font-size:10.6px;letter-spacing:0.11px;right:330.9px;">34</div>
<div class="t" style="top:818.0px;font-size:10.6px;letter-spacing:0.11px;right:259.9px;">34</div>
<div class="t" style="top:818.0px;font-size:10.6px;letter-spacing:0.11px;right:188.9px;">34</div>
<div class="t" style="top:818.0px;font-size:10.6px;font-weight:700;letter-spacing:0.07px;right:77.9px;">408</div>
<div class="t" style="top:851.0px;font-size:10.6px;letter-spacing:-0.02px;left:143px;"><b>Car Wash</b></div>
<div class="t" style="top:851.0px;font-size:10.6px;letter-spacing:0.11px;right:969.9px;">73</div>
<div class="t" style="top:851.0px;font-size:10.6px;letter-spacing:0.11px;right:898.9px;">73</div>
<div class="t" style="top:851.0px;font-size:10.6px;letter-spacing:0.11px;right:827.9px;">73</div>
<div class="t" style="top:851.0px;font-size:10.6px;letter-spacing:0.11px;right:756.9px;">73</div>
<div class="t" style="top:851.0px;font-size:10.6px;letter-spacing:0.11px;right:685.9px;">73</div>
<div class="t" style="top:851.0px;font-size:10.6px;letter-spacing:0.11px;right:614.9px;">73</div>
<div class="t" style="top:851.0px;font-size:10.6px;letter-spacing:0.11px;right:543.9px;">73</div>
<div class="t" style="top:851.0px;font-size:10.6px;letter-spacing:0.11px;right:472.9px;">73</div>
<div class="t" style="top:851.0px;font-size:10.6px;letter-spacing:0.11px;right:401.9px;">73</div>
<div class="t" style="top:851.0px;font-size:10.6px;letter-spacing:0.11px;right:330.9px;">73</div>
<div class="t" style="top:851.0px;font-size:10.6px;letter-spacing:0.11px;right:259.9px;">73</div>
<div class="t" style="top:851.0px;font-size:10.6px;letter-spacing:0.11px;right:188.9px;">73</div>
<div class="t" style="top:851.0px;font-size:10.6px;font-weight:700;letter-spacing:0.07px;right:77.9px;">876</div>
<div class="t" style="top:884.0px;font-size:10.6px;letter-spacing:0.01px;left:143px;"><b>Gas &amp; Fuel</b></div>
<div class="t" style="top:884.0px;font-size:10.6px;letter-spacing:0.11px;right:969.9px;">350</div>
<div class="t" style="top:884.0px;font-size:10.6px;letter-spacing:0.11px;right:898.9px;">350</div>
<div class="t" style="top:884.0px;font-size:10.6px;letter-spacing:0.11px;right:827.9px;">350</div>
<div class="t" style="top:884.0px;font-size:10.6px;letter-spacing:0.11px;right:756.9px;">350</div>
<div class="t" style="top:884.0px;font-size:10.6px;letter-spacing:0.11px;right:685.9px;">350</div>
<div class="t" style="top:884.0px;font-size:10.6px;letter-spacing:0.11px;right:614.9px;">350</div>
<div class="t" style="top:884.0px;font-size:10.6px;letter-spacing:0.11px;right:543.9px;">350</div>
<div class="t" style="top:884.0px;font-size:10.6px;letter-spacing:0.11px;right:472.9px;">350</div>
<div class="t" style="top:884.0px;font-size:10.6px;letter-spacing:0.11px;right:401.9px;">350</div>
<div class="t" style="top:884.0px;font-size:10.6px;letter-spacing:0.11px;right:330.9px;">350</div>
<div class="t" style="top:884.0px;font-size:10.6px;letter-spacing:0.11px;right:259.9px;">350</div>
<div class="t" style="top:884.0px;font-size:10.6px;letter-spacing:0.11px;right:188.9px;">350</div>
<div class="t" style="top:884.0px;font-size:10.6px;font-weight:700;letter-spacing:0.07px;right:77.9px;">4,200</div>
<div class="t" style="top:917.0px;font-size:10.6px;letter-spacing:-0.08px;left:143px;"><b>Service &amp; Parts</b></div>
<div class="t" style="top:917.0px;font-size:10.6px;letter-spacing:0.11px;right:969.9px;">400</div>
<div class="t" style="top:917.0px;font-size:10.6px;letter-spacing:0.11px;right:898.9px;">100</div>
<div class="t" style="top:917.0px;font-size:10.6px;letter-spacing:0.11px;right:827.9px;">100</div>
<div class="t" style="top:917.0px;font-size:10.6px;letter-spacing:0.11px;right:756.9px;">400</div>
<div class="t" style="top:917.0px;font-size:10.6px;letter-spacing:0.11px;right:685.9px;">0</div>
<div class="t" style="top:917.0px;font-size:10.6px;letter-spacing:0.11px;right:614.9px;">100</div>
<div class="t" style="top:917.0px;font-size:10.6px;letter-spacing:0.11px;right:543.9px;">400</div>
<div class="t" style="top:917.0px;font-size:10.6px;letter-spacing:0.11px;right:472.9px;">0</div>
<div class="t" style="top:917.0px;font-size:10.6px;letter-spacing:0.11px;right:401.9px;">100</div>
<div class="t" style="top:917.0px;font-size:10.6px;letter-spacing:0.11px;right:330.9px;">400</div>
<div class="t" style="top:917.0px;font-size:10.6px;letter-spacing:0.11px;right:259.9px;">0</div>
<div class="t" style="top:917.0px;font-size:10.6px;letter-spacing:0.11px;right:188.9px;">361</div>
<div class="t" style="top:917.0px;font-size:10.6px;font-weight:700;letter-spacing:0.07px;right:77.9px;">2,361</div>
<div class="t" style="top:955.2px;font-size:10.6px;letter-spacing:0.01px;left:248px;"><b>Totals</b></div>
<div class="t" style="top:955.2px;font-size:10.6px;letter-spacing:0.11px;right:959.4px;">3,425</div>
<div class="t" style="top:955.2px;font-size:10.6px;letter-spacing:0.11px;right:888.4px;">4,517</div>
<div class="t" style="top:955.2px;font-size:10.6px;letter-spacing:0.11px;right:817.4px;">4,517</div>
<div class="t" style="top:955.2px;font-size:10.6px;letter-spacing:0.11px;right:746.4px;">3,635</div>
<div class="t" style="top:955.2px;font-size:10.6px;letter-spacing:0.11px;right:675.4px;">4,762</div>
<div class="t" style="top:955.2px;font-size:10.6px;letter-spacing:0.11px;right:604.4px;">4,522</div>
<div class="t" style="top:955.2px;font-size:10.6px;letter-spacing:0.11px;right:533.4px;">3,530</div>
<div class="t" style="top:955.2px;font-size:10.6px;letter-spacing:0.11px;right:462.4px;">4,483</div>
<div class="t" style="top:955.2px;font-size:10.6px;letter-spacing:0.11px;right:391.4px;">4,642</div>
<div class="t" style="top:955.2px;font-size:10.6px;letter-spacing:0.11px;right:320.4px;">4,060</div>
<div class="t" style="top:955.2px;font-size:10.6px;letter-spacing:0.11px;right:249.4px;">4,531</div>
<div class="t" style="top:955.2px;font-size:10.6px;letter-spacing:0.11px;right:178.4px;">4,330</div>
<div class="t" style="top:955.2px;font-size:10.6px;font-weight:700;color:#fa0000;letter-spacing:0.07px;right:77.9px;">-50,959</div>

<!-- hand-drawn annotations -->
<svg class="a" style="left:0;top:0" width="1390" height="1007" fill="none" stroke="#0478d7" stroke-width="7.2" stroke-linecap="round" stroke-linejoin="round">
<path d="M460.3 128.6C458.6 128.6 453.6 128.4 450.2 128.6C446.8 128.8 443.4 129.2 440.1 129.6C436.8 130.0 433.7 130.3 430.5 131.2C427.3 132.0 424.2 133.7 420.9 134.7C417.6 135.7 414.2 136.6 410.8 137.2C407.4 137.8 405.7 137.9 400.7 138.0C395.7 138.1 387.3 138.0 380.6 138.0C373.9 138.0 366.3 137.9 360.4 138.0C354.5 138.1 349.8 138.0 345.3 138.4C340.8 138.8 337.4 139.6 333.2 140.2C329.0 140.8 323.2 141.0 320.1 141.7C317.0 142.4 315.9 142.8 314.6 144.2C313.4 145.6 312.9 148.1 312.6 150.3C312.3 152.5 312.5 155.0 312.9 157.3C313.3 159.7 313.7 162.2 315.1 164.4C316.5 166.6 318.2 168.7 321.1 170.4C324.0 172.1 328.3 173.3 332.2 174.5C336.1 175.7 339.6 176.8 344.3 177.3C349.0 177.8 354.3 177.5 360.4 177.5C366.4 177.5 373.9 177.4 380.6 177.3C387.3 177.2 394.0 177.1 400.7 177.0C407.4 176.9 416.0 177.1 420.9 177.0C425.8 176.9 426.9 176.5 430.1 176.5C433.3 176.5 436.8 176.7 440.1 177.0C443.5 177.3 446.8 178.1 450.2 178.5C453.6 178.9 456.9 179.2 460.3 179.5C463.7 179.8 467.0 179.9 470.4 180.5C473.8 181.1 477.0 182.2 480.4 183.0C483.8 183.8 487.1 184.7 490.5 185.5C493.9 186.3 497.2 187.3 500.6 188.1C504.0 188.9 507.6 189.5 510.6 190.1C513.6 190.7 516.2 191.6 518.7 191.8C521.2 192.1 523.4 192.0 525.8 191.6C528.1 191.2 531.0 190.6 532.8 189.6C534.6 188.6 536.0 187.3 536.8 185.5C537.6 183.7 537.5 181.0 537.6 178.5C537.7 176.0 537.3 173.4 537.3 170.4C537.2 167.4 537.3 163.4 537.3 160.4C537.3 157.4 537.5 154.7 537.3 152.3C537.1 149.9 537.0 147.5 536.3 145.8C535.5 144.1 534.5 143.3 532.8 142.2C531.0 141.1 528.6 140.3 525.8 139.2C522.9 138.1 519.1 136.9 515.7 135.7C512.3 134.5 509.0 133.4 505.6 132.2C502.2 131.0 498.9 129.9 495.5 128.6C492.1 127.3 488.7 125.7 485.5 124.6C482.3 123.5 479.2 122.5 476.4 121.9C473.6 121.3 470.1 121.2 468.8 121.1" stroke-width="7.1"/>
<path d="M1233.6 160.4C1236.3 160.3 1243.3 160.2 1250.0 160.1C1256.7 160.0 1266.8 159.8 1273.8 159.9C1280.8 160.0 1286.7 160.2 1291.7 160.5C1296.7 160.8 1299.4 160.9 1303.6 161.7C1307.8 162.5 1312.1 163.7 1316.7 165.2C1321.3 166.7 1326.2 168.7 1331.0 170.8C1335.8 172.9 1341.1 175.3 1345.3 177.6C1349.5 179.9 1353.1 181.9 1356.0 184.4C1358.9 186.9 1361.1 189.7 1362.6 192.5C1364.1 195.3 1364.5 198.3 1365.0 201.2C1365.5 204.0 1365.4 207.0 1365.3 209.6C1365.2 212.2 1365.2 214.5 1364.4 216.7C1363.7 218.9 1361.9 220.5 1360.8 222.7C1359.7 224.9 1358.8 227.2 1357.8 229.8C1356.8 232.4 1356.3 235.4 1354.8 238.2C1353.3 241.0 1351.3 244.1 1348.9 246.5C1346.5 248.9 1343.8 250.8 1340.6 252.5C1337.4 254.2 1334.0 255.8 1329.8 256.6C1325.6 257.4 1319.5 257.1 1315.5 257.2C1311.5 257.3 1309.9 257.1 1305.8 257.2C1301.7 257.3 1294.9 257.8 1290.7 257.7C1286.5 257.6 1283.9 257.3 1280.6 256.7C1277.2 256.1 1273.9 255.1 1270.6 254.2C1267.2 253.3 1263.9 252.0 1260.5 251.2C1257.1 250.4 1255.4 250.0 1250.4 249.2C1245.4 248.3 1237.0 247.3 1230.3 246.1C1223.6 244.9 1216.8 243.3 1210.1 242.1C1203.4 240.8 1196.7 239.8 1190.0 238.6C1183.3 237.3 1175.7 235.9 1170.0 234.6C1164.3 233.3 1160.7 232.6 1155.7 231.0C1150.8 229.4 1144.3 227.1 1140.3 225.1C1136.3 223.1 1133.7 221.3 1131.9 219.1C1130.2 216.9 1129.8 214.4 1129.8 212.0C1129.8 209.6 1130.6 207.3 1131.9 204.8C1133.2 202.3 1135.9 199.7 1137.9 197.1C1139.9 194.5 1142.1 192.0 1143.8 189.3C1145.5 186.6 1147.0 183.3 1148.0 181.0C1149.0 178.7 1148.7 176.9 1149.8 175.6C1150.9 174.3 1152.0 173.6 1154.6 173.2C1157.2 172.8 1161.1 173.1 1165.3 173.1C1169.5 173.1 1174.4 173.0 1179.6 173.0C1184.8 173.0 1191.3 172.8 1196.3 172.9C1201.3 173.0 1205.2 173.6 1209.4 173.8C1213.6 174.1 1217.3 174.0 1221.3 174.4C1225.3 174.8 1229.1 175.5 1233.2 176.0C1237.3 176.5 1243.6 177.0 1245.7 177.2" stroke-width="7.5"/>
<path d="M1266.9 633.4C1268.0 633.8 1268.0 635.3 1273.7 635.7C1279.4 636.1 1292.6 636.0 1300.9 636.0C1309.2 636.0 1318.2 635.5 1323.5 635.7C1328.8 635.9 1330.3 636.2 1332.6 637.2C1334.9 638.2 1336.1 639.4 1337.1 641.7C1338.1 644.0 1338.5 647.5 1338.6 650.8C1338.7 654.1 1338.4 657.9 1337.9 661.4C1337.4 664.9 1336.6 668.9 1335.6 671.9C1334.6 674.9 1334.0 677.7 1332.0 679.2C1330.0 680.7 1328.7 680.7 1323.5 681.0C1318.3 681.3 1308.5 681.1 1300.9 680.8C1293.4 680.5 1284.5 679.6 1278.2 679.0C1271.9 678.4 1267.6 677.8 1263.1 677.3C1258.6 676.8 1254.3 677.1 1251.0 676.2C1247.7 675.3 1245.8 673.9 1243.5 671.9C1241.2 669.9 1239.2 666.9 1237.4 664.4C1235.6 661.9 1233.8 659.2 1232.9 656.8C1232.0 654.4 1231.6 651.9 1232.1 650.0C1232.6 648.1 1234.0 646.6 1235.9 645.5C1237.8 644.4 1240.7 644.1 1243.5 643.2C1246.3 642.3 1249.7 641.3 1252.5 640.2C1255.3 639.1 1257.7 637.5 1260.1 636.4C1262.5 635.3 1265.8 633.9 1266.9 633.4" stroke-width="7.6"/>
</svg>
</body>
</html>
